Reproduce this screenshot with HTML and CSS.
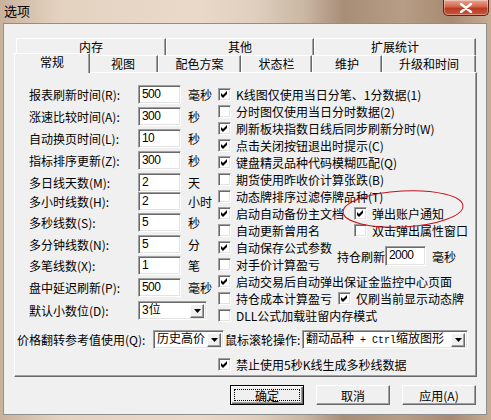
FILE: index.html
```html
<!DOCTYPE html>
<html lang="zh-CN">
<head>
    <meta charset="UTF-8">
    <title>选项</title>
    <link rel="stylesheet" href="styles.css">
</head>
<body>
    <div class="window">
        <div class="titlebar">
            <span class="title">选项</span>
            <span class="close">
                <svg viewBox="0 0 14 10" width="14" height="10"><path d="M2 1 12 9M12 1 2 9" stroke="#fff" stroke-width="2.4" stroke-linecap="round"/></svg>
            </span>
        </div>
        <div class="client">
            <div class="tabs">
                <div class="tab-row row-back">
                    <div class="tab t-mem">内存</div>
                    <div class="tab t-other">其他</div>
                    <div class="tab t-ext">扩展统计</div>
                </div>
                <div class="tab-row row-front">
                    <div class="tab t-gen active">常规</div>
                    <div class="tab t-view">视图</div>
                    <div class="tab t-color">配色方案</div>
                    <div class="tab t-status">状态栏</div>
                    <div class="tab t-maint">维护</div>
                    <div class="tab t-up">升级和时间</div>
                </div>
            </div>

            <div class="panel">
                <div class="panel-main">
                    <div class="fields">
                        <div class="field"><span class="lbl">报表刷新时间(R):</span><span class="edit">500</span><span class="unit">毫秒</span></div>
                        <div class="field"><span class="lbl">涨速比较时间(A):</span><span class="edit">300</span><span class="unit">秒</span></div>
                        <div class="field"><span class="lbl">自动换页时间(L):</span><span class="edit">10</span><span class="unit">秒</span></div>
                        <div class="field"><span class="lbl">指标排序更新(Z):</span><span class="edit">300</span><span class="unit">秒</span></div>
                        <div class="field"><span class="lbl">多日线天数(M):</span><span class="edit">2</span><span class="unit">天</span></div>
                        <div class="field tight"><span class="lbl">多小时线数(H):</span><span class="edit">2</span><span class="unit">小时</span></div>
                        <div class="field snug"><span class="lbl">多秒线数(S):</span><span class="edit">5</span><span class="unit">秒</span></div>
                        <div class="field"><span class="lbl">多分钟线数(N):</span><span class="edit">5</span><span class="unit">分</span></div>
                        <div class="field snug"><span class="lbl">多笔线数(X):</span><span class="edit">1</span><span class="unit">笔</span></div>
                        <div class="field"><span class="lbl">盘中延迟刷新(P):</span><span class="edit">500</span><span class="unit">毫秒</span></div>
                        <div class="field spaced"><span class="lbl">默认小数位(D):</span>
                            <span class="combo c-dec"><span class="combo-text">3位</span><span class="drop"><svg viewBox="0 0 7 4" width="7" height="4"><path d="M0 0H7L3.5 4Z"/></svg></span></span>
                        </div>
                    </div>

                    <div class="checks">
                        <div class="check"><span class="cb"><svg class="tick" viewBox="0 0 7 7"><path d="M0 2 2 4 6 0 6 3 2 7 0 5Z"/></svg></span><span>K线图仅使用当日分笔、1分数据(1)</span></div>
                        <div class="check"><span class="cb"></span><span>分时图仅使用当日分时数据(2)</span></div>
                        <div class="check"><span class="cb"><svg class="tick" viewBox="0 0 7 7"><path d="M0 2 2 4 6 0 6 3 2 7 0 5Z"/></svg></span><span>刷新板块指数日线后同步刷新分时(W)</span></div>
                        <div class="check"><span class="cb"><svg class="tick" viewBox="0 0 7 7"><path d="M0 2 2 4 6 0 6 3 2 7 0 5Z"/></svg></span><span>点击关闭按钮退出时提示(C)</span></div>
                        <div class="check"><span class="cb"><svg class="tick" viewBox="0 0 7 7"><path d="M0 2 2 4 6 0 6 3 2 7 0 5Z"/></svg></span><span>键盘精灵品种代码模糊匹配(Q)</span></div>
                        <div class="check"><span class="cb"></span><span>期货使用昨收价计算张跌(B)</span></div>
                        <div class="check"><span class="cb"></span><span>动态牌排序过滤停牌品种(T)</span></div>
                        <div class="check-line">
                            <div class="check col-backup"><span class="cb"><svg class="tick" viewBox="0 0 7 7"><path d="M0 2 2 4 6 0 6 3 2 7 0 5Z"/></svg></span><span>启动自动备份主文档</span></div>
                            <div class="check"><span class="cb"><svg class="tick" viewBox="0 0 7 7"><path d="M0 2 2 4 6 0 6 3 2 7 0 5Z"/></svg></span><span>弹出账户通知</span></div>
                        </div>
                        <div class="check-line">
                            <div class="check col-backup"><span class="cb"></span><span>自动更新曾用名</span></div>
                            <div class="check"><span class="cb"></span><span>双击弹出属性窗口</span></div>
                        </div>
                        <div class="check-line">
                            <div class="check-pair">
                                <div class="check"><span class="cb"><svg class="tick" viewBox="0 0 7 7"><path d="M0 2 2 4 6 0 6 3 2 7 0 5Z"/></svg></span><span>自动保存公式参数</span></div>
                                <div class="check"><span class="cb"></span><span>对手价计算盈亏</span></div>
                            </div>
                            <div class="refresh">
                                <span>持仓刷新</span><span class="edit e-pos">2000</span><span class="unit">毫秒</span>
                            </div>
                        </div>
                        <div class="check"><span class="cb"><svg class="tick" viewBox="0 0 7 7"><path d="M0 2 2 4 6 0 6 3 2 7 0 5Z"/></svg></span><span>启动交易后自动弹出保证金监控中心页面</span></div>
                        <div class="check-line">
                            <div class="check col-cost"><span class="cb"></span><span>持仓成本计算盈亏</span></div>
                            <div class="check"><span class="cb"><svg class="tick" viewBox="0 0 7 7"><path d="M0 2 2 4 6 0 6 3 2 7 0 5Z"/></svg></span><span>仅刷当前显示动态牌</span></div>
                        </div>
                        <div class="check"><span class="cb"></span><span>DLL公式加载驻留内存模式</span></div>
                    </div>
                </div>

                <div class="panel-row">
                    <span class="lbl-wide">价格翻转参考值使用(Q):</span>
                    <span class="combo c-price"><span class="combo-text">历史高价</span><span class="drop"><svg viewBox="0 0 7 4" width="7" height="4"><path d="M0 0H7L3.5 4Z"/></svg></span></span>
                    <span class="lbl-wheel">鼠标滚轮操作:</span>
                    <span class="combo c-wheel"><span class="combo-text">翻动品种<span class="mono"> + Ctrl</span>缩放图形</span><span class="drop"><svg viewBox="0 0 7 4" width="7" height="4"><path d="M0 0H7L3.5 4Z"/></svg></span></span>
                </div>
                <div class="check last-check"><span class="cb"><svg class="tick" viewBox="0 0 7 7"><path d="M0 2 2 4 6 0 6 3 2 7 0 5Z"/></svg></span><span>禁止使用5秒K线生成多秒线数据</span></div>

                <svg class="mark" viewBox="0 0 130 44" width="130" height="44">
                    <ellipse cx="65" cy="22" rx="60" ry="18" transform="rotate(-3 65 22)" fill="none" stroke="#c8101a" stroke-width="1"/>
                </svg>
            </div>

            <div class="buttons">
                <button class="btn default"><span class="focus">确定</span></button>
                <button class="btn">取消</button>
                <button class="btn">应用(A)</button>
            </div>
        </div>
    </div>
</body>
</html>
```

FILE: styles.css
```css
* {
    margin: 0;
    padding: 0;
    box-sizing: border-box;
}

body {
    width: 491px;
    height: 420px;
    overflow: hidden;
    font-family: "Noto Sans CJK SC", "Noto Sans", sans-serif;
    font-size: 12px;
    color: #000;
}

.window {
    width: 491px;
    height: 420px;
    display: flex;
    flex-direction: column;
    padding: 0 4px 5px 3px;
    background: linear-gradient(90deg, #c9b29c 0%, #e4d2c1 12%, #ead9c9 40%, #e0cfbe 52%, #c9b6a3 62%, #a88e77 70%, #b79d85 82%, #a78a71 92%, #c7ad94 100%);
}

.titlebar {
    height: 23px;
    display: flex;
    justify-content: space-between;
    align-items: flex-start;
}

.title {
    padding: 3px 0 0 1px;
    font-size: 13px;
    line-height: 16px;
}

.close {
    width: 46px;
    height: 16px;
    margin-right: -2px;
    display: flex;
    align-items: center;
    justify-content: center;
    border: 1px solid #5a241b;
    border-top: 0;
    border-radius: 0 0 5px 5px;
    background: linear-gradient(180deg, #e9a592 0%, #d5654c 45%, #bb3a22 55%, #c9553a 100%);
    box-shadow: inset 0 0 0 1px rgba(255, 255, 255, 0.35);
}

.client {
    flex: 1;
    display: flex;
    flex-direction: column;
    background: #f0f0f0;
    border: 1px solid #8f8f8f;
}

/* tabs */
.tabs {
    padding-top: 14px;
}

.tab-row {
    display: flex;
    height: 17px;
}

.row-back {
    margin-left: 12px;
}

.row-front {
    margin-left: 11px;
}

.tab {
    height: 17px;
    line-height: 15px;
    text-align: center;
    border-top: 1px solid #fff;
    border-left: 1px solid #fff;
    border-right: 1px solid #696969;
    box-shadow: inset -1px 0 #a0a0a0;
    background: #f0f0f0;
}

.t-mem { width: 150px; }
.t-other { width: 148px; }
.t-ext { width: 162px; }
.t-gen { width: 73px; }
.t-view { width: 70px; }
.t-color { width: 83px; }
.t-status { width: 71px; }
.t-maint { width: 70px; }
.t-up { width: 94px; }

.tab.active {
    position: relative;
    z-index: 1;
    width: 76px;
    height: 20px;
    margin: -2px -2px 0 -1px;
    line-height: 16px;
}

/* panel */
.panel {
    position: relative;
    width: 463px;
    height: 305px;
    margin-left: 10px;
    border-top: 1px solid #fff;
    border-left: 1px solid #fff;
    border-right: 1px solid #696969;
    border-bottom: 1px solid #696969;
    box-shadow: inset -1px -1px #a0a0a0;
}

.panel-main {
    display: flex;
    padding: 12px 0 0 14px;
}

.fields {
    width: 189px;
}

.field {
    display: flex;
    align-items: center;
    height: 19px;
    margin-bottom: 3px;
}

.field.tight { margin-top: -3px; }
.field.snug { margin-top: -1px; }
.field.spaced { margin-top: 4px; }

.lbl {
    width: 109px;
    white-space: nowrap;
}

.edit {
    width: 43px;
    height: 19px;
    padding-left: 3px;
    line-height: 16px;
    font-family: "Liberation Sans", Arial, sans-serif;
    font-size: 12px;
    letter-spacing: -0.6px;
    background: #fff;
    border-top: 1px solid #a0a0a0;
    border-left: 1px solid #a0a0a0;
    border-right: 1px solid #fff;
    border-bottom: 1px solid #fff;
    box-shadow: inset 1px 1px #696969, inset -1px -1px #e3e3e3;
}

.unit {
    margin-left: 7px;
    white-space: nowrap;
}

.combo {
    display: flex;
    align-items: center;
    height: 19px;
    padding: 0 2px 0 3px;
    background: #fff;
    border-top: 1px solid #a0a0a0;
    border-left: 1px solid #a0a0a0;
    border-right: 1px solid #fff;
    border-bottom: 1px solid #fff;
    box-shadow: inset 1px 1px #696969, inset -1px -1px #e3e3e3;
    font-family: "Liberation Sans", "Noto Sans CJK SC", sans-serif;
}

.combo-text {
    flex: 1;
    white-space: nowrap;
    line-height: 15px;
}

.drop {
    width: 14px;
    height: 14px;
    display: flex;
    align-items: center;
    justify-content: center;
    background: #f0f0f0;
    border-top: 1px solid #fff;
    border-left: 1px solid #fff;
    border-right: 1px solid #696969;
    border-bottom: 1px solid #696969;
    box-shadow: inset -1px -1px #a0a0a0;
}

.c-dec { width: 69px; }
.c-price { width: 71px; }
.c-wheel { width: 166px; }

.mono {
    font-family: "Liberation Mono", monospace;
    font-size: 10px;
}

/* checkboxes */
.checks {
    margin-top: 1px;
    width: 255px;
}

.check {
    display: flex;
    align-items: center;
    gap: 5px;
    height: 17px;
    white-space: nowrap;
}

.cb {
    width: 13px;
    height: 13px;
    flex-shrink: 0;
    display: flex;
    align-items: center;
    justify-content: center;
    background: #fff;
    border-top: 1px solid #a0a0a0;
    border-left: 1px solid #a0a0a0;
    border-right: 1px solid #fff;
    border-bottom: 1px solid #fff;
    box-shadow: inset 1px 1px #696969, inset -1px -1px #e3e3e3;
}

.tick {
    width: 7px;
    height: 7px;
    fill: #000;
}

.check-line {
    display: flex;
    align-items: center;
}

.col-backup { width: 136px; }
.col-cost { width: 120px; }

.check-pair {
    width: 119px;
}

.refresh {
    display: flex;
    align-items: center;
    white-space: nowrap;
}

.e-pos {
    width: 41px;
    height: 20px;
    line-height: 17px;
}

.unit + .unit { margin-left: 0; }

.refresh .unit {
    margin-left: 6px;
}

.panel-row {
    display: flex;
    align-items: center;
    margin-top: 6px;
    padding-left: 2px;
}

.lbl-wide {
    width: 136px;
    white-space: nowrap;
}

.lbl-wheel {
    width: 77px;
    margin-left: 1px;
    white-space: nowrap;
}

.last-check {
    margin-top: 7px;
    padding-left: 203px;
}

.mark {
    position: absolute;
    left: 323px;
    top: 114px;
    overflow: visible;
}

/* buttons */
.buttons {
    display: flex;
    justify-content: flex-end;
    gap: 12px;
    margin-top: 8px;
    padding-right: 10px;
}

.btn {
    width: 74px;
    height: 20px;
    font-family: "Noto Sans CJK SC", sans-serif;
    font-size: 12px;
    color: #000;
    background: #f0f0f0;
    border-top: 1px solid #fff;
    border-left: 1px solid #fff;
    border-right: 1px solid #696969;
    border-bottom: 1px solid #696969;
    box-shadow: inset -1px -1px #a0a0a0;
}

.btn.default {
    border: 1px solid #000;
    box-shadow: inset 1px 1px #fff, inset -1px -1px #696969, inset -2px -2px #a0a0a0;
    padding: 3px;
}

.focus {
    display: block;
    height: 12px;
    line-height: 11px;
    border: 1px dotted #000;
}
```
